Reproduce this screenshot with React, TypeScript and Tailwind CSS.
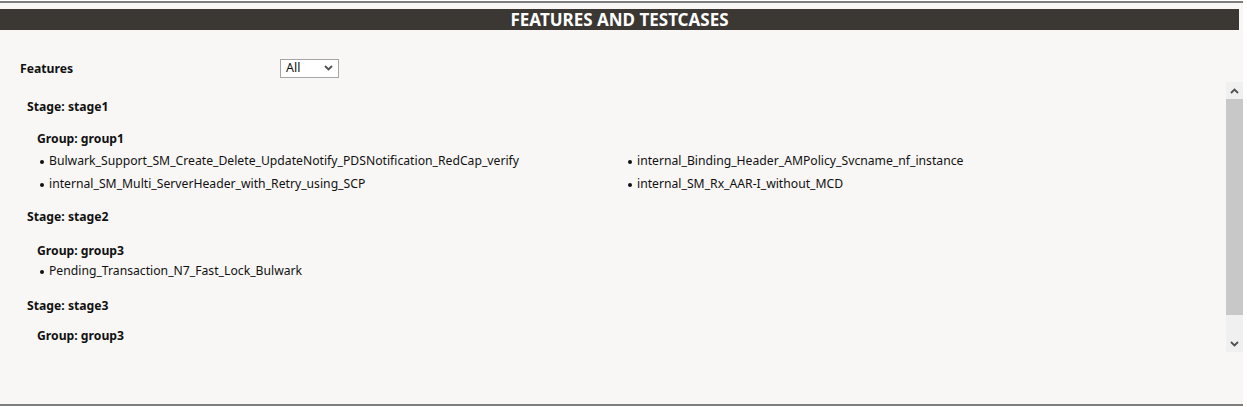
import React from "react";

const font = { fontFamily: '"Segoe UI", "Noto Sans", "Open Sans", sans-serif' };

function Chevron({ dir }: { dir: "up" | "down" }) {
  return (
    <svg width="9" height="6" viewBox="0 0 9 6">
      {dir === "up" ? (
        <path d="M1 5 L4.5 1.5 L8 5" fill="none" stroke="#505050" strokeWidth="1.8" />
      ) : (
        <path d="M1 1 L4.5 4.5 L8 1" fill="none" stroke="#505050" strokeWidth="1.8" />
      )}
    </svg>
  );
}

function Item({ children }: { children: React.ReactNode }) {
  return (
    <li className="flex items-center h-[23px]">
      <span className="w-[4px] h-[4px] rounded-full bg-[#111] ml-[3px] mr-[5px]" />
      <span>{children}</span>
    </li>
  );
}

export default function App() {
  return (
    <div className="w-[1247px] h-[407px] bg-white pt-px text-[#111] text-[12.2px]" style={font}>
      <div className="w-[1243px] h-[405px] bg-[#f8f7f5] border-t-2 border-b-2 border-[#7d7d7d] flex flex-col">
        <div className="mt-[6px] mr-[4px] h-[21px] bg-[#3b3732] text-white font-bold text-[17px] leading-[21px] text-center">
          FEATURES AND TESTCASES
        </div>
        <div className="flex items-center h-[20px] mt-[28px] pl-[20px]">
          <span className="font-bold w-[260px] pt-[3px]">Features</span>
          <div className="w-[59px] h-[19px] bg-white border border-[#a5a5a5] flex items-center justify-between pl-[5px] pr-[5px]">
            <span className="text-[12.5px]">All</span>
            <Chevron dir="down" />
          </div>
        </div>
        <div className="flex h-[270px] mt-[4px]">
          <div className="flex-1 overflow-hidden pl-[27px] pt-[15px]">
            <div className="font-bold h-[20px] leading-[20px]">Stage: stage1</div>
            <div className="pl-[10px] mt-[12px]">
              <div className="font-bold h-[20px] leading-[20px]">Group: group1</div>
              <ul className="grid grid-cols-[588px_1fr] mt-[1px]">
                <Item>Bulwark_Support_SM_Create_Delete_UpdateNotify_PDSNotification_RedCap_verify</Item>
                <Item>internal_Binding_Header_AMPolicy_Svcname_nf_instance</Item>
                <Item>internal_SM_Multi_ServerHeader_with_Retry_using_SCP</Item>
                <Item>internal_SM_Rx_AAR-I_without_MCD</Item>
              </ul>
            </div>
            <div className="font-bold h-[20px] leading-[20px] mt-[11px]">Stage: stage2</div>
            <div className="pl-[10px] mt-[14px]">
              <div className="font-bold h-[20px] leading-[20px]">Group: group3</div>
              <ul className="-mt-[1px]">
                <Item>Pending_Transaction_N7_Fast_Lock_Bulwark</Item>
              </ul>
            </div>
            <div className="font-bold h-[20px] leading-[20px] mt-[13px]">Stage: stage3</div>
            <div className="pl-[10px] mt-[10px]">
              <div className="font-bold h-[20px] leading-[20px]">Group: group3</div>
            </div>
          </div>
          <div className="w-[17px] flex flex-col bg-[#f0f0f0]">
            <div className="h-[17px] flex items-center justify-center">
              <Chevron dir="up" />
            </div>
            <div className="h-[216px] bg-[#c8c8c8]" />
            <div className="flex-1" />
            <div className="h-[17px] flex items-center justify-center">
              <Chevron dir="down" />
            </div>
          </div>
        </div>
      </div>
    </div>
  );
}
